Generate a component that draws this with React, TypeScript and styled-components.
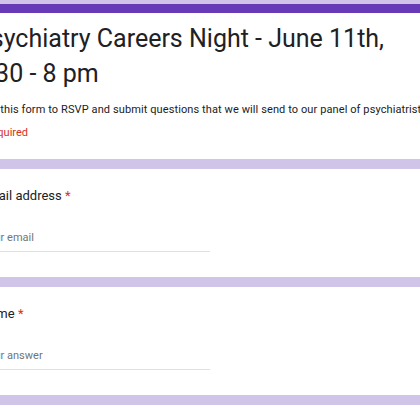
import styled, { createGlobalStyle } from 'styled-components';

const GlobalStyle = createGlobalStyle`
	html, body {
		margin: 0;
		overflow: hidden;
		background: #d1c4e9;
		font-family: Roboto, "Liberation Sans", sans-serif;
	}
`;

const Page = styled.main`
	display: flex;
	flex-direction: column;
	gap: 10px;
	width: 680px;
	margin-left: -44px;
	padding-top: 4px;
`;

const Card = styled.section<{ $top?: boolean }>`
	background: #fff;
	border-radius: 8px;
	padding: ${(props) => (props.$top ? '8px 24px 17px' : '17px 24px 25px')};
	border-top: ${(props) => (props.$top ? '9px solid #673ab7' : 'none')};
`;

const Title = styled.h1`
	margin: 0 0 0 -5px;
	font-size: 25px;
	line-height: 35px;
	font-weight: 400;
	color: #202124;
	white-space: nowrap;
`;

const Description = styled.p`
	margin: 10px 0 0 3px;
	font-size: 11px;
	line-height: 18px;
	letter-spacing: 0.1px;
	color: #202124;
	white-space: nowrap;
`;

const Required = styled.div`
	margin-top: 5px;
	font-size: 11px;
	line-height: 18px;
	color: #d93025;
`;

const Label = styled.div`
	font-size: 13px;
	line-height: 20px;
	color: #202124;

	span {
		color: #d93025;
	}
`;

const Input = styled.div`
	width: 228px;
	margin: 23px 0 0 2px;
	padding-bottom: 4px;
	font-size: 11px;
	line-height: 18px;
	color: #70757a;
	border-bottom: 1px solid #e0e0e0;
`;

const questions = [
	{ id: 'email', label: 'Email address', placeholder: 'Your email' },
	{ id: 'name', label: 'Name', placeholder: 'Your answer' },
];

function App() {
	return (
		<>
			<GlobalStyle />
			<Page>
				<Card $top>
					<Title>
						Psychiatry Careers Night - June 11th,
						<br />
						6:30 - 8 pm
					</Title>
					<Description>
						Fill this form to RSVP and submit questions that we will send to our panel of psychiatrists.
					</Description>
					<Required>*Required</Required>
				</Card>
				{questions.map((q) => (
					<Card key={q.id}>
						<Label>
							{q.label} <span>*</span>
						</Label>
						<Input>{q.placeholder}</Input>
					</Card>
				))}
				<Card>
					<Label>Year of study</Label>
				</Card>
			</Page>
		</>
	);
}

export default App;
